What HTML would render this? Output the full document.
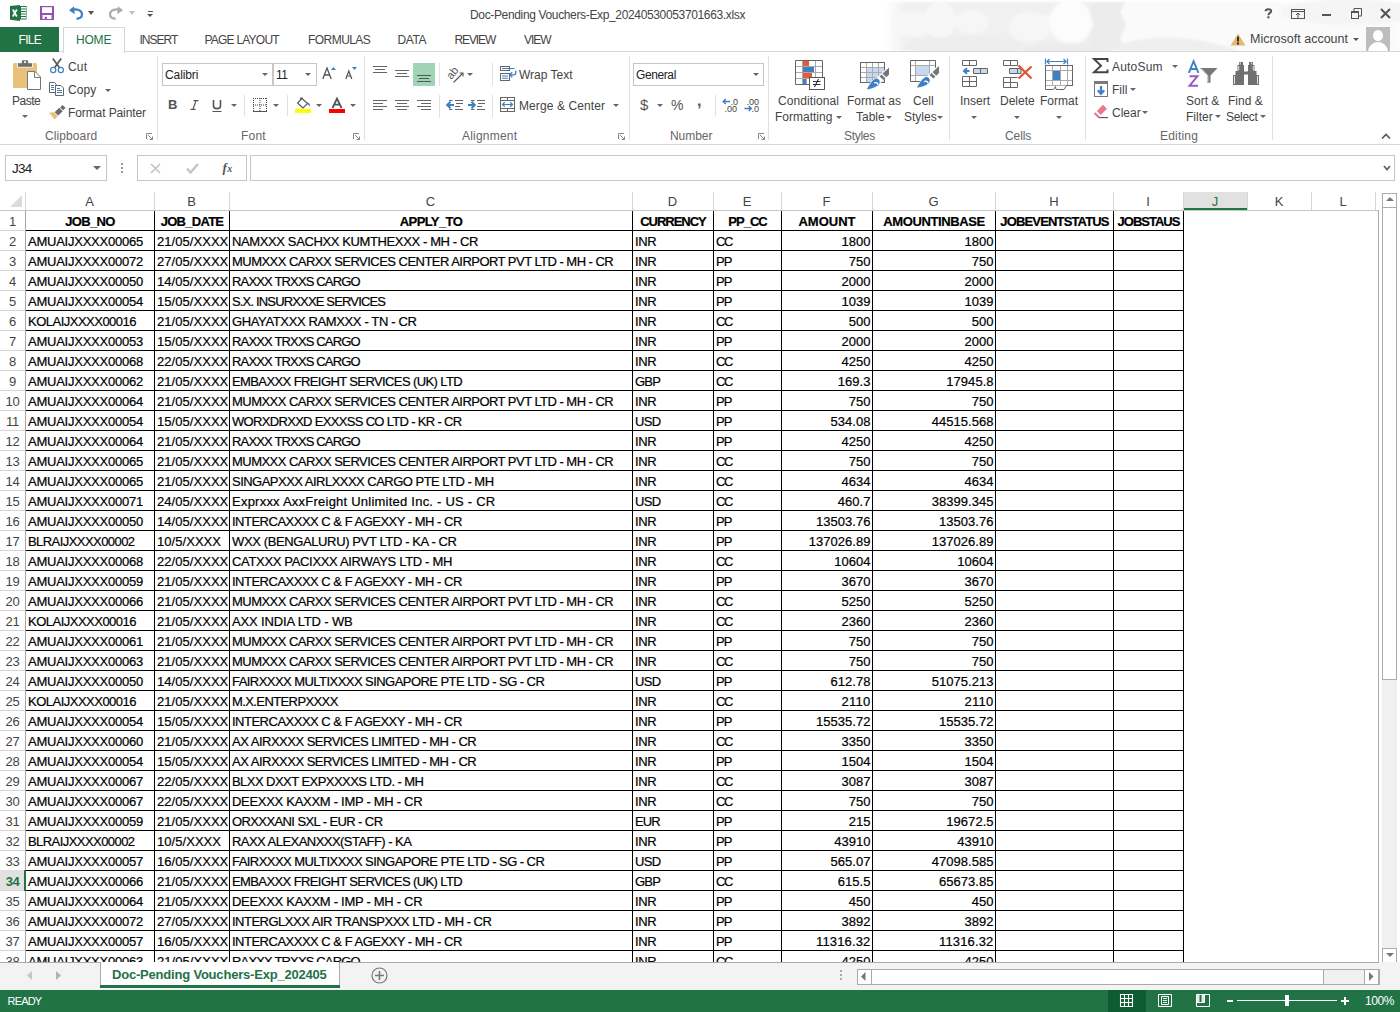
<!DOCTYPE html>
<html><head><meta charset="utf-8"><title>Excel</title>
<style>
html,body{margin:0;padding:0}
body{width:1400px;height:1012px;position:relative;overflow:hidden;background:#fff;font-family:"Liberation Sans",sans-serif;color:#444}
.a{position:absolute}
.t{position:absolute;white-space:pre;font-size:12px;line-height:14px;color:#444}
.c{position:absolute;white-space:pre;font-size:13px;line-height:20px;height:20px;color:#000;margin-top:2px;-webkit-text-stroke:0.2px #000}
.b{font-weight:bold}
.rh{position:absolute;left:0;width:25px;text-align:center;font-size:13px;line-height:20px;color:#444;letter-spacing:-0.3px;margin-top:2px}
.chd{position:absolute;top:193px;height:18px;text-align:center;font-size:13px;line-height:18px;color:#444}
.tab{position:absolute;top:28px;height:24px;line-height:24px;font-size:12px;color:#444;white-space:pre}
.sep{position:absolute;width:1px;background:#e1e1e1}
.gl{position:absolute;top:129px;font-size:12px;line-height:14px;color:#666;white-space:pre}
.dd{position:absolute;width:0;height:0;border-left:3px solid transparent;border-right:3px solid transparent;border-top:3px solid #666}
svg{position:absolute;overflow:visible}
</style></head>
<body>
<!-- ============ TITLE BAR ============ -->
<svg id="clouds" style="left:880px;top:0;overflow:hidden" width="520" height="51" viewBox="880 0 520 51">
 <defs>
  <linearGradient id="fadeL" x1="0" x2="1"><stop offset="0" stop-color="#fff"/><stop offset="1" stop-color="#f0f0f0"/></linearGradient>
  <filter id="bl" x="-10%" y="-10%" width="120%" height="120%"><feGaussianBlur stdDeviation="0.8"/></filter>
 </defs>
 <g filter="url(#bl)">
 <rect x="888" y="2" width="240" height="49" fill="#f0f0f0"/>
 <rect x="885" y="2" width="22" height="49" fill="url(#fadeL)"/>
 <ellipse cx="912" cy="24" rx="22" ry="13" fill="#f7f7f7"/>
 <ellipse cx="940" cy="20" rx="16" ry="18" fill="#f7f7f7"/>
 <ellipse cx="972" cy="22" rx="17" ry="12" fill="#f6f6f6"/>
 <ellipse cx="965" cy="46" rx="60" ry="9" fill="#ededed"/>
 <ellipse cx="1030" cy="27" rx="22" ry="15" fill="#f6f6f6"/>
 <ellipse cx="1043" cy="19" rx="7" ry="5" fill="#f6f6f6"/>
 <ellipse cx="1071" cy="22" rx="22" ry="22" fill="#fcfcfc"/>
 <ellipse cx="1065" cy="50" rx="45" ry="7" fill="#ececec"/>
 <path d="M1095 2H1128V51H1093L1088 36L1094 25L1089 12Z" fill="#ececec"/>
 <path d="M1125 2H1400V51H1125L1120 38L1126 25L1120 12Z" fill="#fafafa"/>
 <path d="M1110 51C1130 36 1180 30 1240 51Z" fill="#efefef"/>
 <ellipse cx="1350" cy="12" rx="70" ry="13" fill="#f5f5f5"/>
 </g>
</svg>
<div class="t" style="left:470px;top:8px;font-size:12px;letter-spacing:-0.35px;color:#444">Doc-Pending Vouchers-Exp_20240530053701663.xlsx</div>

<!-- QAT -->
<svg style="left:10px;top:5px" width="17" height="16" viewBox="0 0 17 16">
 <rect x="9" y="1" width="7.5" height="13.5" fill="#217346"/>
 <path d="M11 2.7H16M11 5.2H16M11 7.7H16M11 10.2H16M11 12.7H16" stroke="#fff" stroke-width="1.4"/>
 <path d="M0 1 L10 0 L10 16 L0 14.8Z" fill="#217346"/>
 <path d="M2.8 4.5 L6.8 11.5 M6.8 4.5 L2.8 11.5" stroke="#fff" stroke-width="1.7"/>
</svg>
<svg style="left:40px;top:6px" width="14" height="14" viewBox="0 0 14 14">
 <rect x="0" y="0" width="14" height="14" fill="#9450b4"/>
 <rect x="2" y="1.2" width="10" height="5.8" fill="#fff"/>
 <rect x="2.5" y="9" width="9" height="4" fill="#fff"/>
 <rect x="4.7" y="10.8" width="2.3" height="2.2" fill="#9450b4"/>
</svg>
<svg style="left:68px;top:5px" width="16" height="15" viewBox="0 0 16 15">
 <path d="M3 5 C9 3.5 14 5 14 9.5 C14 12.5 11 13.5 8.5 13.8" fill="none" stroke="#3f7fc1" stroke-width="2.2"/>
 <path d="M1 5.2 L6 1.2 L6.8 9.2Z" fill="#3f7fc1"/>
</svg>
<div class="dd" style="left:88px;top:11px;border-left-width:3.5px;border-right-width:3.5px;border-top:4px solid #555"></div>
<svg style="left:108px;top:5px" width="16" height="15" viewBox="0 0 16 15">
 <g transform="translate(16 0) scale(-1 1)">
 <path d="M3 5 C9 3.5 14 5 14 9.5 C14 12.5 11 13.5 8.5 13.8" fill="none" stroke="#ababab" stroke-width="2.2"/>
 <path d="M1 5.2 L6 1.2 L6.8 9.2Z" fill="#ababab"/>
 </g>
</svg>
<div class="dd" style="left:129px;top:11px;border-left-width:3.5px;border-right-width:3.5px;border-top:4px solid #c0c0c0"></div>
<div class="a" style="left:148px;top:11px;width:5px;height:1px;background:#555"></div>
<div class="dd" style="left:147px;top:14px;border-left-width:3.5px;border-right-width:3.5px;border-top:3.5px solid #555"></div>

<!-- window controls -->
<svg style="left:1262px;top:6px" width="12" height="14" viewBox="1262 6 12 14">
 <path d="M1265.6 11.2C1265.6 8.6 1271.2 8.4 1271.2 11C1271.2 13 1268.4 12.8 1268.4 15.2" fill="none" stroke="#555" stroke-width="2"/>
 <rect x="1267.3" y="16.3" width="2.2" height="2" fill="#555"/>
</svg>
<svg style="left:1291px;top:9px" width="14" height="10" viewBox="0 0 14 10">
 <rect x="0.5" y="0.5" width="13" height="9" fill="none" stroke="#555"/>
 <path d="M1 2.5H13" stroke="#555"/>
 <path d="M7 9V4 M5 6L7 4L9 6" fill="none" stroke="#555"/>
</svg>
<div class="a" style="left:1322px;top:14px;width:9px;height:2px;background:#555"></div>
<svg style="left:1351px;top:8px" width="11" height="11" viewBox="0 0 11 11">
 <rect x="0.5" y="3.5" width="7" height="7" fill="none" stroke="#555"/>
 <path d="M0.5 4.5H7.5" stroke="#555"/>
 <path d="M3 3V0.5H10.5V8H8" fill="none" stroke="#555"/>
</svg>
<svg style="left:1380px;top:8px" width="11" height="11" viewBox="0 0 11 11">
 <path d="M1 1L10 10M10 1L1 10" stroke="#555" stroke-width="2.1"/>
</svg>

<!-- ============ TABS ============ -->
<div class="a" style="left:0;top:51px;width:1400px;height:1px;background:#d5d5d5"></div>
<div class="a" style="left:0;top:27px;width:59px;height:25px;background:#217346"></div>
<div class="tab" style="left:18.5px;color:#fff;letter-spacing:-0.7px">FILE</div>
<div class="a" style="left:63px;top:27px;width:60px;height:25px;background:#fff;border:1px solid #d5d5d5;border-bottom:none"></div>
<div class="tab" style="left:76px;color:#217346;letter-spacing:-0.2px">HOME</div>
<div class="tab" style="left:139.5px;letter-spacing:-1px">INSERT</div>
<div class="tab" style="left:204.5px;letter-spacing:-0.78px">PAGE LAYOUT</div>
<div class="tab" style="left:308px;letter-spacing:-0.55px">FORMULAS</div>
<div class="tab" style="left:397.5px;letter-spacing:-0.4px">DATA</div>
<div class="tab" style="left:454.5px;letter-spacing:-1.1px">REVIEW</div>
<div class="tab" style="left:524px;letter-spacing:-1px">VIEW</div>

<svg style="left:1230px;top:33px" width="16" height="13" viewBox="0 0 16 13">
 <path d="M8 0.5L15.5 12.5H0.5Z" fill="#e8b96c"/>
 <rect x="7" y="3.5" width="2" height="5" fill="#333"/>
 <rect x="7" y="9.5" width="2" height="2" fill="#333"/>
</svg>
<div class="tab" style="left:1250px;top:27px;font-size:12.5px;letter-spacing:0px;color:#444">Microsoft account</div>
<div class="dd" style="left:1353px;top:38px;border-top-color:#555"></div>
<div class="a" style="left:1366px;top:27px;width:24px;height:24px;background:#bdbdbd;overflow:hidden">
 <div class="a" style="left:7px;top:3px;width:10px;height:11px;border-radius:50%;background:#fff"></div>
 <div class="a" style="left:2px;top:15px;width:20px;height:14px;border-radius:10px 10px 0 0;background:#fff"></div>
</div>

<!-- ============ RIBBON ============ -->
<div class="a" style="left:0;top:144px;width:1400px;height:1px;background:#d5d5d5"></div>
<div class="sep" style="left:157px;top:56px;height:84px"></div>
<div class="sep" style="left:364px;top:56px;height:84px"></div>
<div class="sep" style="left:629px;top:56px;height:84px"></div>
<div class="sep" style="left:768px;top:56px;height:84px"></div>
<div class="sep" style="left:949px;top:56px;height:84px"></div>
<div class="sep" style="left:1085px;top:56px;height:84px"></div>
<div class="sep" style="left:1272px;top:56px;height:84px"></div>

<!-- Clipboard -->
<svg style="left:8px;top:56px" width="36" height="38" viewBox="8 56 36 38">
 <rect x="13" y="63" width="24" height="25" rx="1.5" fill="#e9c279"/>
 <rect x="17.2" y="62.5" width="15.6" height="5" fill="#fff"/>
 <rect x="18" y="63.2" width="14" height="3.6" fill="#6f6f6f"/>
 <rect x="21.8" y="60.2" width="6.4" height="4" rx="1.2" fill="#6f6f6f"/>
 <rect x="24" y="61.3" width="2" height="1.6" fill="#fff"/>
 <path d="M27.5 71.5H35L40.5 77V89.5H27.5Z" fill="#fff" stroke="#777"/>
 <path d="M34.5 71.5V77.5H40.5" fill="none" stroke="#777"/>
</svg>
<div class="t" style="left:12px;top:94px;letter-spacing:-0.5px">Paste</div>
<div class="dd" style="left:22px;top:115px"></div>
<svg style="left:46px;top:56px" width="20" height="20" viewBox="46 56 20 20">
 <path d="M52.8 58.5L59.5 67.8M61.2 58.5L54.5 67.8" stroke="#595959" stroke-width="1.7"/>
 <circle cx="53.2" cy="70" r="2.6" fill="#fff" stroke="#3e80c4" stroke-width="1.2"/>
 <circle cx="60.8" cy="70" r="2.6" fill="#fff" stroke="#3e80c4" stroke-width="1.2"/>
</svg>
<div class="t" style="left:68px;top:60px;letter-spacing:0.2px">Cut</div>
<svg style="left:47px;top:80px" width="20" height="18" viewBox="47 80 20 18">
 <path d="M49.5 82.5H54.5L56 84V92.5H49.5Z" fill="#fff" stroke="#666"/>
 <path d="M51 85.5H54M51 87.5H54M51 89.5H54" stroke="#3e80c4"/>
 <path d="M55.5 85.5H61L63.5 88V95.5H55.5Z" fill="#fff" stroke="#666"/>
 <path d="M57 88.5H60M57 90.5H62M57 92.5H62" stroke="#3e80c4"/>
</svg>
<div class="t" style="left:68px;top:83px;letter-spacing:0.1px">Copy</div>
<div class="dd" style="left:105px;top:89px"></div>
<svg style="left:47px;top:103px" width="20" height="18" viewBox="47 103 20 18">
 <path d="M62.5 105L65.5 107.8L63.2 110.2L60.2 107.4Z" fill="#6a6a6a"/>
 <path d="M59.2 107.8L62.8 111.2L58.2 115.6L54.6 112.2Z" fill="#6a6a6a"/>
 <path d="M53.8 112.3L58 116.3L54.5 119.5L49 112.5Z" fill="#e9c279"/>
</svg>
<div class="t" style="left:68px;top:106px;letter-spacing:-0.1px">Format Painter</div>
<div class="gl" style="left:45px;letter-spacing:0.1px">Clipboard</div>
<svg style="left:146px;top:133px" width="7" height="7" viewBox="0 0 7 7">
 <path d="M0.5 6V0.5H6" fill="none" stroke="#888"/><path d="M2 2L6.5 6.5M6.5 3.5V6.5H3.5" fill="none" stroke="#888"/>
</svg>

<!-- Font -->
<div class="a" style="left:162px;top:63px;width:109px;height:21px;border:1px solid #c6c6c6;background:#fff"></div>
<div class="t" style="left:165px;top:68px;color:#222;letter-spacing:-0.1px">Calibri</div>
<div class="dd" style="left:262px;top:73px;border-top-color:#666"></div>
<div class="a" style="left:273px;top:63px;width:42px;height:21px;border:1px solid #c6c6c6;background:#fff"></div>
<div class="t" style="left:276px;top:68px;color:#222;letter-spacing:-0.5px">11</div>
<div class="dd" style="left:305px;top:73px;border-top-color:#666"></div>
<svg style="left:322px;top:66px" width="36" height="14" viewBox="0 0 36 14">
 <path d="M0.8 13L5 2L9.2 13M2.4 9H7.6" fill="none" stroke="#555" stroke-width="1.3"/>
 <path d="M9 4L11.5 1L14 4Z" fill="#3c7ec2"/>
 <path d="M23.8 13L26.8 5L29.8 13M25 10H28.6" fill="none" stroke="#555" stroke-width="1.2"/>
 <path d="M30 1H35L32.5 4Z" fill="#3c7ec2"/>
</svg>
<div class="t" style="left:168px;top:98px;font-weight:bold;font-size:13px;color:#555">B</div>
<svg style="left:190px;top:100px" width="9" height="10" viewBox="0 0 9 10">
 <path d="M3.5 0.6H8.5M0.5 9.4H5.5M6 0.6L3 9.4" fill="none" stroke="#555" stroke-width="1.2"/>
</svg>
<svg style="left:212px;top:100px" width="10" height="12" viewBox="0 0 10 12">
 <path d="M1.5 0V6C1.5 9.5 8.5 9.5 8.5 6V0" fill="none" stroke="#555" stroke-width="1.6"/>
 <path d="M0.5 11.5H9.5" stroke="#555" stroke-width="1"/>
</svg>
<div class="dd" style="left:231px;top:104px"></div>
<div class="sep" style="left:244px;top:95px;height:21px"></div>
<svg style="left:253px;top:98px" width="14" height="14" viewBox="0 0 14 14">
 <path d="M0.5 0V13M13.5 0V13M0 0.5H14M7 0V13M0 7H14" fill="none" stroke="#444" stroke-dasharray="1 1"/>
 <path d="M0 13.5H14" stroke="#555"/>
</svg>
<div class="dd" style="left:273px;top:104px"></div>
<div class="sep" style="left:287px;top:95px;height:21px"></div>
<svg style="left:295px;top:97px" width="17" height="17" viewBox="0 0 17 17">
 <path d="M7 1.5L12.5 6.5L8 11L2.5 6Z" fill="#fff" stroke="#555" stroke-width="1.1"/>
 <path d="M5.5 3V1H8" fill="none" stroke="#555"/>
 <path d="M12 5.5C14 5.5 15.5 7 14.5 9.5L12.5 7Z" fill="#3c7ec2"/>
 <rect x="0" y="12" width="16" height="4" fill="#ffff00"/>
</svg>
<div class="dd" style="left:316px;top:104px"></div>
<svg style="left:329px;top:97px" width="17" height="17" viewBox="0 0 17 17">
 <path d="M3.5 11L8 1.5L12.5 11M5.3 7.6H10.7" fill="none" stroke="#555" stroke-width="1.8"/>
 <rect x="0" y="12" width="16" height="4" fill="#ff0000"/>
</svg>
<div class="dd" style="left:350px;top:104px"></div>
<div class="gl" style="left:241px;letter-spacing:0.2px">Font</div>
<svg style="left:353px;top:133px" width="7" height="7" viewBox="0 0 7 7">
 <path d="M0.5 6V0.5H6" fill="none" stroke="#888"/><path d="M2 2L6.5 6.5M6.5 3.5V6.5H3.5" fill="none" stroke="#888"/>
</svg>

<!-- Alignment -->
<svg style="left:372px;top:63px" width="64" height="23" viewBox="0 0 64 23">
 <path d="M1 3.5H15M3 6.5H13M1 9.5H15" stroke="#666" stroke-width="1.1"/>
 <path d="M23 7.5H37M25 10.5H35M23 13.5H37" stroke="#666" stroke-width="1.1"/>
 <rect x="41" y="0" width="22" height="23" fill="#9fd5b4"/>
 <path d="M45 12.5H59M47 15.5H57M45 18.5H59" stroke="#555" stroke-width="1.1"/>
</svg>
<div class="sep" style="left:439px;top:63px;height:23px"></div>
<svg style="left:446px;top:66px" width="20" height="18" viewBox="0 0 20 18">
 <text x="0" y="0" font-size="11" font-family="Liberation Sans" fill="#555" transform="translate(5.5 14) rotate(-52)">ab</text>
 <path d="M7.5 16.5L17 7M13.5 7H17V10.5" fill="none" stroke="#555" stroke-width="1.1"/>
</svg>
<div class="dd" style="left:467px;top:73px"></div>
<div class="sep" style="left:492px;top:63px;height:23px"></div>
<svg style="left:497px;top:63px" width="22" height="20" viewBox="497 63 22 20">
 <rect x="500.5" y="66.5" width="9" height="4" fill="#fff" stroke="#666"/>
 <path d="M502 68.5H514.5" stroke="#3e80c4" stroke-width="1.1"/>
 <rect x="500.5" y="73.5" width="9" height="7" fill="#fff" stroke="#666"/>
 <path d="M502 76H508M502 78.3H508" stroke="#3e80c4" stroke-width="1.1"/>
 <path d="M515.8 70.5V72.5C515.8 74 515 74.8 513.5 74.8H510" fill="none" stroke="#3e80c4" stroke-width="1.3"/>
 <path d="M512.3 72.3L509.8 74.8L512.3 77.3" fill="none" stroke="#3e80c4" stroke-width="1.3"/>
</svg>
<div class="t" style="left:519px;top:68px;letter-spacing:0px">Wrap Text</div>
<svg style="left:372px;top:98px" width="64" height="14" viewBox="0 0 64 14">
 <path d="M1 2.5H15M1 5.5H11M1 8.5H15M1 11.5H11" stroke="#666" stroke-width="1.1"/>
 <path d="M23 2.5H37M25 5.5H35M23 8.5H37M25 11.5H35" stroke="#666" stroke-width="1.1"/>
 <path d="M45 2.5H59M49 5.5H59M45 8.5H59M49 11.5H59" stroke="#666" stroke-width="1.1"/>
</svg>
<div class="sep" style="left:439px;top:95px;height:23px"></div>
<svg style="left:446px;top:98px" width="40" height="14" viewBox="0 0 40 14">
 <path d="M3 2.5H6.5M9 2.5H17M10 5.5H17M9 8.5H14M3 11.5H6.5M9 11.5H17" stroke="#666" stroke-width="1.1"/>
 <path d="M1 7H8M4.5 3.8L1.2 7L4.5 10.2" fill="none" stroke="#3c7ec2" stroke-width="2"/>
 <path d="M25 2.5H28.5M31 2.5H39M32 5.5H39M31 8.5H36M25 11.5H28.5M31 11.5H39" stroke="#666" stroke-width="1.1"/>
 <path d="M22 7H29M25.5 3.8L28.8 7L25.5 10.2" fill="none" stroke="#3c7ec2" stroke-width="2"/>
</svg>
<div class="sep" style="left:492px;top:95px;height:23px"></div>
<svg style="left:497px;top:94px" width="22" height="20" viewBox="497 94 22 20">
 <rect x="500.5" y="97.5" width="14" height="14" fill="#fff" stroke="#666"/>
 <path d="M500.5 100.5H514.5M500.5 108.5H514.5M507.5 97.5V100.5M507.5 108.5V111.5" fill="none" stroke="#666"/>
 <path d="M502.5 104.5H512.5M504.8 102.3L502.5 104.5L504.8 106.7M510.2 102.3L512.5 104.5L510.2 106.7" fill="none" stroke="#3e80c4" stroke-width="1.2"/>
</svg>
<div class="t" style="left:519px;top:99px;letter-spacing:0.1px">Merge &amp; Center</div>
<div class="dd" style="left:613px;top:104px"></div>
<div class="gl" style="left:462px;letter-spacing:0.2px">Alignment</div>
<svg style="left:618px;top:133px" width="7" height="7" viewBox="0 0 7 7">
 <path d="M0.5 6V0.5H6" fill="none" stroke="#888"/><path d="M2 2L6.5 6.5M6.5 3.5V6.5H3.5" fill="none" stroke="#888"/>
</svg>

<!-- Number -->
<div class="a" style="left:633px;top:63px;width:129px;height:21px;border:1px solid #c6c6c6;background:#fff"></div>
<div class="t" style="left:636px;top:68px;color:#222;letter-spacing:-0.4px">General</div>
<div class="dd" style="left:753px;top:73px;border-top-color:#666"></div>
<div class="t" style="left:640px;top:97px;font-size:15px;line-height:16px;color:#555">$</div>
<div class="dd" style="left:657px;top:104px"></div>
<div class="t" style="left:671px;top:98px;font-size:14px;color:#555">%</div>
<div class="t" style="left:697px;top:94px;font-size:16px;font-weight:bold;color:#555">,</div>
<div class="sep" style="left:715px;top:95px;height:21px"></div>
<svg style="left:722px;top:97px" width="40" height="16" viewBox="0 0 40 16">
 <text x="8.5" y="7.5" font-size="9" font-family="Liberation Sans" fill="#444">.0</text>
 <text x="2.5" y="14.5" font-size="9" font-family="Liberation Sans" fill="#444">.00</text>
 <path d="M1 4.5H8M3.8 2L1.2 4.5L3.8 7" fill="none" stroke="#3c7ec2" stroke-width="1.4"/>
 <text x="24.5" y="7.5" font-size="9" font-family="Liberation Sans" fill="#444">.00</text>
 <text x="29.5" y="14.5" font-size="9" font-family="Liberation Sans" fill="#444">.0</text>
 <path d="M22.5 11.5H29.5M26.7 9L29.3 11.5L26.7 14" fill="none" stroke="#3c7ec2" stroke-width="1.4"/>
</svg>
<div class="gl" style="left:670px;letter-spacing:-0.05px">Number</div>
<svg style="left:758px;top:133px" width="7" height="7" viewBox="0 0 7 7">
 <path d="M0.5 6V0.5H6" fill="none" stroke="#888"/><path d="M2 2L6.5 6.5M6.5 3.5V6.5H3.5" fill="none" stroke="#888"/>
</svg>

<!-- Styles -->
<svg style="left:790px;top:55px" width="40" height="40" viewBox="790 55 40 40">
 <rect x="803" y="61" width="6" height="5" fill="#e25b37"/>
 <rect x="803" y="67" width="11" height="5" fill="#3e80c4"/>
 <rect x="803" y="73" width="9" height="5" fill="#e25b37"/>
 <rect x="803" y="79" width="3.6" height="5" fill="#3e80c4"/>
 <path d="M795.5 66.5H822.5M795.5 72.5H822.5M795.5 78.5H809M802.5 60.5V84.5M815.5 60.5V77" fill="none" stroke="#aaa" stroke-width="1"/>
 <path d="M795.5 60.5H822.5V77M809 84.5H795.5V60.5" fill="none" stroke="#666" stroke-width="1"/>
 <rect x="809.5" y="77.5" width="15" height="12" fill="#fff" stroke="#555"/>
 <path d="M813 81.5H820.5M813 84.5H820.5M818.5 79L814.5 87" fill="none" stroke="#333" stroke-width="1.1"/>
</svg>
<div class="t" style="left:778px;top:94px;letter-spacing:0.1px">Conditional</div>
<div class="t" style="left:775px;top:110px;letter-spacing:0px">Formatting</div>
<div class="dd" style="left:836px;top:116px"></div>
<svg style="left:855px;top:55px" width="40" height="40" viewBox="855 55 40 40">
 <rect x="866.5" y="67.5" width="18" height="15" fill="#c5d9f1"/>
 <path d="M866.5 62.5V82.5M872.5 62.5V82.5M878.5 62.5V82.5M860.5 67.5H884.5M860.5 72.5H884.5M860.5 77.5H884.5" fill="none" stroke="#aaa"/>
 <rect x="860.5" y="62.5" width="24" height="20" fill="none" stroke="#666"/>
 <path d="M889 66L889 74.5L880.5 83L876 78.5Z" fill="#fff"/>
 <path d="M889 67.5V74.5L883.5 80L879.5 76.5Z" fill="#767676"/>
 <path d="M882 74L886 78" stroke="#fff" stroke-width="1.2"/>
 <path d="M876.5 78C881 79 881.5 84 877 86.5C873.5 88.5 869 89.8 866.3 89.8C868.5 85.5 872 79 876.5 78Z" fill="#3e80c4" stroke="#fff" stroke-width="0.8"/>
 <path d="M874 83C876 82 878 83 878 85" fill="none" stroke="#fff" stroke-width="1.3"/>
</svg>
<div class="t" style="left:847px;top:94px;letter-spacing:0px">Format as</div>
<div class="t" style="left:856px;top:110px;letter-spacing:0px">Table</div>
<div class="dd" style="left:886px;top:116px"></div>
<svg style="left:905px;top:55px" width="40" height="40" viewBox="905 55 40 40">
 <rect x="915.5" y="65.5" width="14" height="10" fill="#c5d9f1"/>
 <path d="M915.5 60.5V81.5M929.5 60.5V77M910.5 65.5H935.5M910.5 75.5H929.5" fill="none" stroke="#aaa"/>
 <path d="M921 81.5H910.5V60.5H935.5V68" fill="none" stroke="#666"/>
 <path d="M939 64.5L939 73L930.5 81.5L926 77Z" fill="#fff"/>
 <path d="M939 66V73L933.5 78.5L929.5 75Z" fill="#767676"/>
 <path d="M932 72.5L936 76.5" stroke="#fff" stroke-width="1.2"/>
 <path d="M926.5 76.5C931 77.5 931.5 82.5 927 85C923.5 87 919 88 916.3 88C918.5 84 922 77.5 926.5 76.5Z" fill="#3e80c4" stroke="#fff" stroke-width="0.8"/>
 <path d="M924 81.5C926 80.5 928 81.5 928 83.5" fill="none" stroke="#fff" stroke-width="1.3"/>
</svg>
<div class="t" style="left:913px;top:94px;letter-spacing:0px">Cell</div>
<div class="t" style="left:904px;top:110px;letter-spacing:0px">Styles</div>
<div class="dd" style="left:937px;top:116px"></div>
<div class="gl" style="left:844px;letter-spacing:-0.3px">Styles</div>

<!-- Cells -->
<svg style="left:955px;top:55px" width="40" height="40" viewBox="955 55 40 40">
 <path d="M962.5 60.5H976.5V65.5H962.5Z M969.5 60.5V65.5" fill="none" stroke="#666"/>
 <path d="M973.5 68.5H987.5V73.5H973.5Z" fill="#c5d9f1" stroke="#666"/>
 <path d="M980.5 68.5V73.5" stroke="#666"/>
 <path d="M962.5 76.5H976.5V86.5H962.5Z M969.5 76.5V86.5 M962.5 81.5H976.5" fill="none" stroke="#666"/>
 <path d="M969.5 71H964.5M967 68.3L964 71L967 73.7" fill="none" stroke="#3e80c4" stroke-width="2"/>
</svg>
<div class="t" style="left:960px;top:94px;letter-spacing:0px">Insert</div>
<div class="dd" style="left:971px;top:116px"></div>
<svg style="left:1000px;top:55px" width="40" height="40" viewBox="1000 55 40 40">
 <path d="M1003.5 60.5H1017.5V65.5H1003.5Z M1010.5 60.5V65.5" fill="none" stroke="#666"/>
 <path d="M1009.5 68.5H1021V73.5H1009.5Z" fill="#c5d9f1" stroke="#666"/>
 <path d="M1017.5 68.5V73.5" stroke="#666"/>
 <path d="M1017.5 77.5H1003.5V87.5H1017.5V82.5M1010.5 77.5V87.5M1003.5 82.5H1017.5" fill="none" stroke="#666"/>
 <path d="M1018.5 65.5L1031.5 78.5M1031.5 66.5L1018.5 78.5" stroke="#e0533a" stroke-width="2.3"/>
</svg>
<div class="t" style="left:1000px;top:94px;letter-spacing:0px">Delete</div>
<div class="dd" style="left:1014px;top:116px"></div>
<svg style="left:1040px;top:55px" width="40" height="40" viewBox="1040 55 40 40">
 <path d="M1045.5 58.5V64.5M1067.5 58.5V64.5M1047 61.5H1066M1049.5 59L1047 61.5L1049.5 64M1063.5 59L1066 61.5L1063.5 64" fill="none" stroke="#3e80c4" stroke-width="1.2"/>
 <rect x="1053" y="71" width="7.5" height="9" fill="#3e80c4"/>
 <path d="M1052.5 65.5V85.5M1060.5 65.5V85.5M1067.5 65.5V85.5M1045.5 70.5H1072.5M1045.5 80.5H1072.5" fill="none" stroke="#aaa"/>
 <rect x="1045.5" y="65.5" width="27" height="20" fill="none" stroke="#666"/>
 <path d="M1045.5 85.5V89.5H1053.5L1055.5 86.5L1056 89.5H1064L1066.5 85.5" fill="#fff" stroke="#666"/>
</svg>
<div class="t" style="left:1040px;top:94px;letter-spacing:0px">Format</div>
<div class="dd" style="left:1056px;top:116px"></div>
<div class="gl" style="left:1005px;letter-spacing:-0.1px">Cells</div>

<!-- Editing -->
<svg style="left:1090px;top:55px" width="20" height="20" viewBox="1090 55 20 20">
 <path d="M1107.5 62V59H1094L1101 65.8L1094 72.3H1107.5V69.5" fill="none" stroke="#444" stroke-width="1.9" stroke-linejoin="miter"/>
</svg>
<div class="t" style="left:1112px;top:60px;letter-spacing:0.2px">AutoSum</div>
<div class="dd" style="left:1172px;top:65px"></div>
<svg style="left:1090px;top:78px" width="20" height="22" viewBox="1090 78 20 22">
 <rect x="1094.5" y="81.5" width="13" height="15" fill="#fff" stroke="#777"/>
 <rect x="1094" y="81" width="14" height="3" fill="#7a7a7a"/>
 <path d="M1101 86V93.5M1097.8 90.3L1101 93.8L1104.2 90.3" fill="none" stroke="#3e80c4" stroke-width="2.2"/>
</svg>
<div class="t" style="left:1112px;top:83px;letter-spacing:0px">Fill</div>
<div class="dd" style="left:1130px;top:88px"></div>
<svg style="left:1090px;top:102px" width="20" height="18" viewBox="1090 102 20 18">
 <path d="M1103 104.8L1107 108.8L1100.8 115L1096.8 111Z" fill="#e8798f"/>
 <path d="M1095.3 112.3L1099.8 116.8L1098.3 118.2L1093.8 113.7Z" fill="#e8798f"/>
 <path d="M1099 117.6H1108" stroke="#555" stroke-width="1.1"/>
</svg>
<div class="t" style="left:1112px;top:106px;letter-spacing:0px">Clear</div>
<div class="dd" style="left:1142px;top:111px"></div>
<svg style="left:1185px;top:58px" width="36" height="32" viewBox="1185 58 36 32">
 <path d="M1188.8 72.8L1193.6 61.2L1198.4 72.8M1190.5 69H1196.7" fill="none" stroke="#3e80c4" stroke-width="1.9"/>
 <path d="M1189.5 76.2H1197.5L1189.5 85.8H1198" fill="none" stroke="#9b59c5" stroke-width="1.9"/>
 <path d="M1200 68H1217.5L1210.5 75.5V82.8H1207V75.5Z" fill="#777"/>
 <path d="M1201.5 68.8L1207.8 75.8V82.5" fill="none" stroke="#fff" stroke-width="0.9"/>
</svg>
<div class="t" style="left:1186px;top:94px;letter-spacing:0px">Sort &amp;</div>
<div class="t" style="left:1186px;top:110px;letter-spacing:0px">Filter</div>
<div class="dd" style="left:1215px;top:115px"></div>
<svg style="left:1230px;top:58px" width="32" height="30" viewBox="1230 58 32 30">
 <path d="M1239 62H1243V65H1244V85H1233V75H1235.5V71H1237.5V65H1239Z" fill="#707070"/>
 <path d="M1253 62H1249V65H1248V85H1259V75H1256.5V71H1254.5V65H1253Z" fill="#707070"/>
 <rect x="1244" y="71.5" width="4" height="3" fill="#707070"/>
 <path d="M1234.5 76V84M1257.5 76V84M1240.3 62.5V64.5M1251.7 62.5V64.5M1238.7 66V70.5M1253.3 66V70.5" stroke="#fff" stroke-width="0.8"/>
</svg>
<div class="t" style="left:1228px;top:94px;letter-spacing:0px">Find &amp;</div>
<div class="t" style="left:1226px;top:110px;letter-spacing:-0.3px">Select</div>
<div class="dd" style="left:1260px;top:115px"></div>
<div class="gl" style="left:1160px;letter-spacing:0.2px">Editing</div>
<svg style="left:1381px;top:133px" width="10" height="6" viewBox="0 0 10 6">
 <path d="M1 5.5L5 1.5L9 5.5" fill="none" stroke="#555" stroke-width="1.6"/>
</svg>

<!-- ============ FORMULA BAR ============ -->
<div class="a" style="left:5px;top:155px;width:100px;height:24px;border:1px solid #c6c6c6"></div>
<div class="t" style="left:12px;top:162px;font-size:13.5px;color:#222;letter-spacing:-0.7px">J34</div>
<div class="dd" style="left:93px;top:166px;border-left-width:4px;border-right-width:4px;border-top-width:4px;border-top-color:#666"></div>
<div class="a" style="left:121px;top:163px;width:2px;height:2px;background:#999"></div>
<div class="a" style="left:121px;top:167px;width:2px;height:2px;background:#999"></div>
<div class="a" style="left:121px;top:171px;width:2px;height:2px;background:#999"></div>
<div class="a" style="left:137px;top:155px;width:108px;height:24px;border:1px solid #c6c6c6"></div>
<svg style="left:150px;top:163px" width="11" height="11" viewBox="0 0 11 11">
 <path d="M1 1L10 10M10 1L1 10" stroke="#c4c4c4" stroke-width="1.7"/>
</svg>
<svg style="left:186px;top:163px" width="13" height="11" viewBox="0 0 13 11">
 <path d="M1 5.5L4.5 9.5L12 1" fill="none" stroke="#c4c4c4" stroke-width="2.4"/>
</svg>
<svg style="left:220px;top:160px" width="18" height="16" viewBox="220 160 18 16">
 <text x="222.5" y="172" font-size="13" font-style="italic" font-weight="bold" font-family="Liberation Serif" fill="#555">f</text>
 <text x="227.3" y="172" font-size="10" font-style="italic" font-weight="bold" font-family="Liberation Serif" fill="#555">x</text>
</svg>
<div class="a" style="left:250px;top:155px;width:1143px;height:24px;border:1px solid #c6c6c6"></div>
<svg style="left:1383px;top:165px" width="8" height="6" viewBox="0 0 8 6">
 <path d="M1 1L4 4.5L7 1" fill="none" stroke="#666" stroke-width="1.8"/>
</svg>

<!-- ============ COLUMN HEADERS ============ -->
<svg style="left:10px;top:195px" width="13" height="12" viewBox="0 0 13 12">
 <path d="M12 0V12H0Z" fill="#dcdcdc"/>
</svg>
<div class="a" style="left:25px;top:192px;width:1px;height:18px;background:#d4d4d4"></div>
<div class="chd" style="left:25px;width:129px">A</div>
<div class="a" style="left:154px;top:192px;width:1px;height:18px;background:#d4d4d4"></div>
<div class="chd" style="left:154px;width:75px">B</div>
<div class="a" style="left:229px;top:192px;width:1px;height:18px;background:#d4d4d4"></div>
<div class="chd" style="left:229px;width:403px">C</div>
<div class="a" style="left:632px;top:192px;width:1px;height:18px;background:#d4d4d4"></div>
<div class="chd" style="left:632px;width:81px">D</div>
<div class="a" style="left:713px;top:192px;width:1px;height:18px;background:#d4d4d4"></div>
<div class="chd" style="left:713px;width:68px">E</div>
<div class="a" style="left:781px;top:192px;width:1px;height:18px;background:#d4d4d4"></div>
<div class="chd" style="left:781px;width:91px">F</div>
<div class="a" style="left:872px;top:192px;width:1px;height:18px;background:#d4d4d4"></div>
<div class="chd" style="left:872px;width:123px">G</div>
<div class="a" style="left:995px;top:192px;width:1px;height:18px;background:#d4d4d4"></div>
<div class="chd" style="left:995px;width:118px">H</div>
<div class="a" style="left:1113px;top:192px;width:1px;height:18px;background:#d4d4d4"></div>
<div class="chd" style="left:1113px;width:70px">I</div>
<div class="a" style="left:1183px;top:192px;width:1px;height:18px;background:#d4d4d4"></div>
<div class="a" style="left:1184px;top:192px;width:63px;height:18px;background:#e1e1e1"></div>
<div class="a" style="left:1184px;top:208px;width:63px;height:2px;background:#217346"></div>
<div class="chd" style="left:1183px;width:64px;color:#217346">J</div>
<div class="a" style="left:1247px;top:192px;width:1px;height:18px;background:#d4d4d4"></div>
<div class="chd" style="left:1247px;width:64px">K</div>
<div class="a" style="left:1311px;top:192px;width:1px;height:18px;background:#d4d4d4"></div>
<div class="chd" style="left:1311px;width:64px">L</div>
<div class="a" style="left:1375px;top:192px;width:1px;height:18px;background:#d4d4d4"></div>
<div class="a" style="left:0;top:210px;width:1379px;height:1px;background:#c6c6c6"></div>

<!-- ============ GRID ============ -->
<div class="a" style="left:25px;top:211px;width:1px;height:751px;background:#c6c6c6"></div>
<div class="rh" style="top:210px">1</div>
<div class="a" style="left:0;top:230px;width:25px;height:1px;background:#d4d4d4"></div>
<div class="rh" style="top:230px">2</div>
<div class="a" style="left:0;top:250px;width:25px;height:1px;background:#d4d4d4"></div>
<div class="rh" style="top:250px">3</div>
<div class="a" style="left:0;top:270px;width:25px;height:1px;background:#d4d4d4"></div>
<div class="rh" style="top:270px">4</div>
<div class="a" style="left:0;top:290px;width:25px;height:1px;background:#d4d4d4"></div>
<div class="rh" style="top:290px">5</div>
<div class="a" style="left:0;top:310px;width:25px;height:1px;background:#d4d4d4"></div>
<div class="rh" style="top:310px">6</div>
<div class="a" style="left:0;top:330px;width:25px;height:1px;background:#d4d4d4"></div>
<div class="rh" style="top:330px">7</div>
<div class="a" style="left:0;top:350px;width:25px;height:1px;background:#d4d4d4"></div>
<div class="rh" style="top:350px">8</div>
<div class="a" style="left:0;top:370px;width:25px;height:1px;background:#d4d4d4"></div>
<div class="rh" style="top:370px">9</div>
<div class="a" style="left:0;top:390px;width:25px;height:1px;background:#d4d4d4"></div>
<div class="rh" style="top:390px">10</div>
<div class="a" style="left:0;top:410px;width:25px;height:1px;background:#d4d4d4"></div>
<div class="rh" style="top:410px">11</div>
<div class="a" style="left:0;top:430px;width:25px;height:1px;background:#d4d4d4"></div>
<div class="rh" style="top:430px">12</div>
<div class="a" style="left:0;top:450px;width:25px;height:1px;background:#d4d4d4"></div>
<div class="rh" style="top:450px">13</div>
<div class="a" style="left:0;top:470px;width:25px;height:1px;background:#d4d4d4"></div>
<div class="rh" style="top:470px">14</div>
<div class="a" style="left:0;top:490px;width:25px;height:1px;background:#d4d4d4"></div>
<div class="rh" style="top:490px">15</div>
<div class="a" style="left:0;top:510px;width:25px;height:1px;background:#d4d4d4"></div>
<div class="rh" style="top:510px">16</div>
<div class="a" style="left:0;top:530px;width:25px;height:1px;background:#d4d4d4"></div>
<div class="rh" style="top:530px">17</div>
<div class="a" style="left:0;top:550px;width:25px;height:1px;background:#d4d4d4"></div>
<div class="rh" style="top:550px">18</div>
<div class="a" style="left:0;top:570px;width:25px;height:1px;background:#d4d4d4"></div>
<div class="rh" style="top:570px">19</div>
<div class="a" style="left:0;top:590px;width:25px;height:1px;background:#d4d4d4"></div>
<div class="rh" style="top:590px">20</div>
<div class="a" style="left:0;top:610px;width:25px;height:1px;background:#d4d4d4"></div>
<div class="rh" style="top:610px">21</div>
<div class="a" style="left:0;top:630px;width:25px;height:1px;background:#d4d4d4"></div>
<div class="rh" style="top:630px">22</div>
<div class="a" style="left:0;top:650px;width:25px;height:1px;background:#d4d4d4"></div>
<div class="rh" style="top:650px">23</div>
<div class="a" style="left:0;top:670px;width:25px;height:1px;background:#d4d4d4"></div>
<div class="rh" style="top:670px">24</div>
<div class="a" style="left:0;top:690px;width:25px;height:1px;background:#d4d4d4"></div>
<div class="rh" style="top:690px">25</div>
<div class="a" style="left:0;top:710px;width:25px;height:1px;background:#d4d4d4"></div>
<div class="rh" style="top:710px">26</div>
<div class="a" style="left:0;top:730px;width:25px;height:1px;background:#d4d4d4"></div>
<div class="rh" style="top:730px">27</div>
<div class="a" style="left:0;top:750px;width:25px;height:1px;background:#d4d4d4"></div>
<div class="rh" style="top:750px">28</div>
<div class="a" style="left:0;top:770px;width:25px;height:1px;background:#d4d4d4"></div>
<div class="rh" style="top:770px">29</div>
<div class="a" style="left:0;top:790px;width:25px;height:1px;background:#d4d4d4"></div>
<div class="rh" style="top:790px">30</div>
<div class="a" style="left:0;top:810px;width:25px;height:1px;background:#d4d4d4"></div>
<div class="rh" style="top:810px">31</div>
<div class="a" style="left:0;top:830px;width:25px;height:1px;background:#d4d4d4"></div>
<div class="rh" style="top:830px">32</div>
<div class="a" style="left:0;top:850px;width:25px;height:1px;background:#d4d4d4"></div>
<div class="rh" style="top:850px">33</div>
<div class="a" style="left:0;top:870px;width:25px;height:1px;background:#d4d4d4"></div>
<div class="a" style="left:0;top:870px;width:24px;height:20px;background:#e1e1e1"></div>
<div class="rh" style="top:870px;color:#217346;font-weight:bold;letter-spacing:-0.6px">34</div>
<div class="a" style="left:0;top:890px;width:25px;height:1px;background:#d4d4d4"></div>
<div class="rh" style="top:890px">35</div>
<div class="a" style="left:0;top:910px;width:25px;height:1px;background:#d4d4d4"></div>
<div class="rh" style="top:910px">36</div>
<div class="a" style="left:0;top:930px;width:25px;height:1px;background:#d4d4d4"></div>
<div class="rh" style="top:930px">37</div>
<div class="a" style="left:0;top:950px;width:25px;height:1px;background:#d4d4d4"></div>
<div class="rh" style="top:950px">38</div>
<div class="a" style="left:0;top:970px;width:25px;height:1px;background:#d4d4d4"></div>
<div class="a" style="left:26px;top:230px;width:1158px;height:1px;background:#000"></div>
<div class="a" style="left:26px;top:250px;width:1158px;height:1px;background:#000"></div>
<div class="a" style="left:26px;top:270px;width:1158px;height:1px;background:#000"></div>
<div class="a" style="left:26px;top:290px;width:1158px;height:1px;background:#000"></div>
<div class="a" style="left:26px;top:310px;width:1158px;height:1px;background:#000"></div>
<div class="a" style="left:26px;top:330px;width:1158px;height:1px;background:#000"></div>
<div class="a" style="left:26px;top:350px;width:1158px;height:1px;background:#000"></div>
<div class="a" style="left:26px;top:370px;width:1158px;height:1px;background:#000"></div>
<div class="a" style="left:26px;top:390px;width:1158px;height:1px;background:#000"></div>
<div class="a" style="left:26px;top:410px;width:1158px;height:1px;background:#000"></div>
<div class="a" style="left:26px;top:430px;width:1158px;height:1px;background:#000"></div>
<div class="a" style="left:26px;top:450px;width:1158px;height:1px;background:#000"></div>
<div class="a" style="left:26px;top:470px;width:1158px;height:1px;background:#000"></div>
<div class="a" style="left:26px;top:490px;width:1158px;height:1px;background:#000"></div>
<div class="a" style="left:26px;top:510px;width:1158px;height:1px;background:#000"></div>
<div class="a" style="left:26px;top:530px;width:1158px;height:1px;background:#000"></div>
<div class="a" style="left:26px;top:550px;width:1158px;height:1px;background:#000"></div>
<div class="a" style="left:26px;top:570px;width:1158px;height:1px;background:#000"></div>
<div class="a" style="left:26px;top:590px;width:1158px;height:1px;background:#000"></div>
<div class="a" style="left:26px;top:610px;width:1158px;height:1px;background:#000"></div>
<div class="a" style="left:26px;top:630px;width:1158px;height:1px;background:#000"></div>
<div class="a" style="left:26px;top:650px;width:1158px;height:1px;background:#000"></div>
<div class="a" style="left:26px;top:670px;width:1158px;height:1px;background:#000"></div>
<div class="a" style="left:26px;top:690px;width:1158px;height:1px;background:#000"></div>
<div class="a" style="left:26px;top:710px;width:1158px;height:1px;background:#000"></div>
<div class="a" style="left:26px;top:730px;width:1158px;height:1px;background:#000"></div>
<div class="a" style="left:26px;top:750px;width:1158px;height:1px;background:#000"></div>
<div class="a" style="left:26px;top:770px;width:1158px;height:1px;background:#000"></div>
<div class="a" style="left:26px;top:790px;width:1158px;height:1px;background:#000"></div>
<div class="a" style="left:26px;top:810px;width:1158px;height:1px;background:#000"></div>
<div class="a" style="left:26px;top:830px;width:1158px;height:1px;background:#000"></div>
<div class="a" style="left:26px;top:850px;width:1158px;height:1px;background:#000"></div>
<div class="a" style="left:26px;top:870px;width:1158px;height:1px;background:#000"></div>
<div class="a" style="left:26px;top:890px;width:1158px;height:1px;background:#000"></div>
<div class="a" style="left:26px;top:910px;width:1158px;height:1px;background:#000"></div>
<div class="a" style="left:26px;top:930px;width:1158px;height:1px;background:#000"></div>
<div class="a" style="left:26px;top:950px;width:1158px;height:1px;background:#000"></div>
<div class="a" style="left:154px;top:211px;width:1px;height:751px;background:#000"></div>
<div class="a" style="left:229px;top:211px;width:1px;height:751px;background:#000"></div>
<div class="a" style="left:632px;top:211px;width:1px;height:751px;background:#000"></div>
<div class="a" style="left:713px;top:211px;width:1px;height:751px;background:#000"></div>
<div class="a" style="left:781px;top:211px;width:1px;height:751px;background:#000"></div>
<div class="a" style="left:872px;top:211px;width:1px;height:751px;background:#000"></div>
<div class="a" style="left:995px;top:211px;width:1px;height:751px;background:#000"></div>
<div class="a" style="left:1113px;top:211px;width:1px;height:751px;background:#000"></div>
<div class="a" style="left:25px;top:211px;width:1px;height:751px;background:#a6a6a6"></div>
<div class="a" style="left:1183px;top:211px;width:1px;height:751px;background:#000"></div>
<div class="a" style="left:24px;top:870px;width:2px;height:21px;background:#217346"></div>
<div class="c b" style="top:210px;left:65.3px;letter-spacing:-0.66px">JOB_NO</div>
<div class="c b" style="top:210px;left:160.7px;letter-spacing:-0.72px">JOB_DATE</div>
<div class="c b" style="top:210px;left:399.8px;letter-spacing:-0.60px">APPLY_TO</div>
<div class="c b" style="top:210px;left:640.2px;letter-spacing:-1.01px">CURRENCY</div>
<div class="c b" style="top:210px;left:728.3px;letter-spacing:-0.98px">PP_CC</div>
<div class="c b" style="top:210px;left:798.4px;letter-spacing:0.02px">AMOUNT</div>
<div class="c b" style="top:210px;left:883.2px;letter-spacing:-0.38px">AMOUNTINBASE</div>
<div class="c b" style="top:210px;left:1000.3px;letter-spacing:-0.84px">JOBEVENTSTATUS</div>
<div class="c b" style="top:210px;left:1117.6px;letter-spacing:-1.01px">JOBSTAUS</div>
<div class="c" style="top:230px;left:28px;letter-spacing:-0.24px">AMUAIJXXXX00065</div>
<div class="c" style="top:230px;left:157px;letter-spacing:0.05px">21/05/XXXX</div>
<div class="c" style="top:230px;left:232px;letter-spacing:-0.38px">NAMXXX SACHXX KUMTHEXXX - MH - CR</div>
<div class="c" style="top:230px;left:635px;letter-spacing:-0.34px">INR</div>
<div class="c" style="top:230px;left:716px;letter-spacing:-1.47px">CC</div>
<div class="c" style="top:230px;left:841.5px;letter-spacing:0.02px">1800</div>
<div class="c" style="top:230px;left:964.5px;letter-spacing:0.02px">1800</div>
<div class="c" style="top:250px;left:28px;letter-spacing:-0.24px">AMUAIJXXXX00072</div>
<div class="c" style="top:250px;left:157px;letter-spacing:0.05px">27/05/XXXX</div>
<div class="c" style="top:250px;left:232px;letter-spacing:-0.53px">MUMXXX CARXX SERVICES CENTER AIRPORT PVT LTD - MH - CR</div>
<div class="c" style="top:250px;left:635px;letter-spacing:-0.34px">INR</div>
<div class="c" style="top:250px;left:716px;letter-spacing:-1.00px">PP</div>
<div class="c" style="top:250px;left:848.8px;letter-spacing:0.02px">750</div>
<div class="c" style="top:250px;left:971.8px;letter-spacing:0.02px">750</div>
<div class="c" style="top:270px;left:28px;letter-spacing:-0.24px">AMUAIJXXXX00050</div>
<div class="c" style="top:270px;left:157px;letter-spacing:0.05px">14/05/XXXX</div>
<div class="c" style="top:270px;left:232px;letter-spacing:-0.84px">RAXXX TRXXS CARGO</div>
<div class="c" style="top:270px;left:635px;letter-spacing:-0.34px">INR</div>
<div class="c" style="top:270px;left:716px;letter-spacing:-1.00px">PP</div>
<div class="c" style="top:270px;left:841.5px;letter-spacing:0.02px">2000</div>
<div class="c" style="top:270px;left:964.5px;letter-spacing:0.02px">2000</div>
<div class="c" style="top:290px;left:28px;letter-spacing:-0.24px">AMUAIJXXXX00054</div>
<div class="c" style="top:290px;left:157px;letter-spacing:0.05px">15/05/XXXX</div>
<div class="c" style="top:290px;left:232px;letter-spacing:-0.84px">S.X. INSURXXXE SERVICES</div>
<div class="c" style="top:290px;left:635px;letter-spacing:-0.34px">INR</div>
<div class="c" style="top:290px;left:716px;letter-spacing:-1.00px">PP</div>
<div class="c" style="top:290px;left:841.5px;letter-spacing:0.02px">1039</div>
<div class="c" style="top:290px;left:964.5px;letter-spacing:0.02px">1039</div>
<div class="c" style="top:310px;left:28px;letter-spacing:-0.51px">KOLAIJXXXX00016</div>
<div class="c" style="top:310px;left:157px;letter-spacing:0.05px">21/05/XXXX</div>
<div class="c" style="top:310px;left:232px;letter-spacing:-0.37px">GHAYATXXX RAMXXX - TN - CR</div>
<div class="c" style="top:310px;left:635px;letter-spacing:-0.34px">INR</div>
<div class="c" style="top:310px;left:716px;letter-spacing:-1.47px">CC</div>
<div class="c" style="top:310px;left:848.8px;letter-spacing:0.02px">500</div>
<div class="c" style="top:310px;left:971.8px;letter-spacing:0.02px">500</div>
<div class="c" style="top:330px;left:28px;letter-spacing:-0.24px">AMUAIJXXXX00053</div>
<div class="c" style="top:330px;left:157px;letter-spacing:0.05px">15/05/XXXX</div>
<div class="c" style="top:330px;left:232px;letter-spacing:-0.84px">RAXXX TRXXS CARGO</div>
<div class="c" style="top:330px;left:635px;letter-spacing:-0.34px">INR</div>
<div class="c" style="top:330px;left:716px;letter-spacing:-1.00px">PP</div>
<div class="c" style="top:330px;left:841.5px;letter-spacing:0.02px">2000</div>
<div class="c" style="top:330px;left:964.5px;letter-spacing:0.02px">2000</div>
<div class="c" style="top:350px;left:28px;letter-spacing:-0.24px">AMUAIJXXXX00068</div>
<div class="c" style="top:350px;left:157px;letter-spacing:0.05px">22/05/XXXX</div>
<div class="c" style="top:350px;left:232px;letter-spacing:-0.84px">RAXXX TRXXS CARGO</div>
<div class="c" style="top:350px;left:635px;letter-spacing:-0.34px">INR</div>
<div class="c" style="top:350px;left:716px;letter-spacing:-1.47px">CC</div>
<div class="c" style="top:350px;left:841.5px;letter-spacing:0.02px">4250</div>
<div class="c" style="top:350px;left:964.5px;letter-spacing:0.02px">4250</div>
<div class="c" style="top:370px;left:28px;letter-spacing:-0.24px">AMUAIJXXXX00062</div>
<div class="c" style="top:370px;left:157px;letter-spacing:0.05px">21/05/XXXX</div>
<div class="c" style="top:370px;left:232px;letter-spacing:-0.60px">EMBAXXX FREIGHT SERVICES (UK) LTD</div>
<div class="c" style="top:370px;left:635px;letter-spacing:-0.79px">GBP</div>
<div class="c" style="top:370px;left:716px;letter-spacing:-1.47px">CC</div>
<div class="c" style="top:370px;left:837.8px;letter-spacing:0.04px">169.3</div>
<div class="c" style="top:370px;left:946.3px;letter-spacing:0.04px">17945.8</div>
<div class="c" style="top:390px;left:28px;letter-spacing:-0.24px">AMUAIJXXXX00064</div>
<div class="c" style="top:390px;left:157px;letter-spacing:0.05px">21/05/XXXX</div>
<div class="c" style="top:390px;left:232px;letter-spacing:-0.53px">MUMXXX CARXX SERVICES CENTER AIRPORT PVT LTD - MH - CR</div>
<div class="c" style="top:390px;left:635px;letter-spacing:-0.34px">INR</div>
<div class="c" style="top:390px;left:716px;letter-spacing:-1.00px">PP</div>
<div class="c" style="top:390px;left:848.8px;letter-spacing:0.02px">750</div>
<div class="c" style="top:390px;left:971.8px;letter-spacing:0.02px">750</div>
<div class="c" style="top:410px;left:28px;letter-spacing:-0.24px">AMUAIJXXXX00054</div>
<div class="c" style="top:410px;left:157px;letter-spacing:0.05px">15/05/XXXX</div>
<div class="c" style="top:410px;left:232px;letter-spacing:-0.68px">WORXDRXXD EXXXSS CO LTD - KR - CR</div>
<div class="c" style="top:410px;left:635px;letter-spacing:-0.66px">USD</div>
<div class="c" style="top:410px;left:716px;letter-spacing:-1.00px">PP</div>
<div class="c" style="top:410px;left:830.5px;letter-spacing:0.04px">534.08</div>
<div class="c" style="top:410px;left:931.8px;letter-spacing:0.03px">44515.568</div>
<div class="c" style="top:430px;left:28px;letter-spacing:-0.24px">AMUAIJXXXX00064</div>
<div class="c" style="top:430px;left:157px;letter-spacing:0.05px">21/05/XXXX</div>
<div class="c" style="top:430px;left:232px;letter-spacing:-0.84px">RAXXX TRXXS CARGO</div>
<div class="c" style="top:430px;left:635px;letter-spacing:-0.34px">INR</div>
<div class="c" style="top:430px;left:716px;letter-spacing:-1.00px">PP</div>
<div class="c" style="top:430px;left:841.5px;letter-spacing:0.02px">4250</div>
<div class="c" style="top:430px;left:964.5px;letter-spacing:0.02px">4250</div>
<div class="c" style="top:450px;left:28px;letter-spacing:-0.24px">AMUAIJXXXX00065</div>
<div class="c" style="top:450px;left:157px;letter-spacing:0.05px">21/05/XXXX</div>
<div class="c" style="top:450px;left:232px;letter-spacing:-0.53px">MUMXXX CARXX SERVICES CENTER AIRPORT PVT LTD - MH - CR</div>
<div class="c" style="top:450px;left:635px;letter-spacing:-0.34px">INR</div>
<div class="c" style="top:450px;left:716px;letter-spacing:-1.47px">CC</div>
<div class="c" style="top:450px;left:848.8px;letter-spacing:0.02px">750</div>
<div class="c" style="top:450px;left:971.8px;letter-spacing:0.02px">750</div>
<div class="c" style="top:470px;left:28px;letter-spacing:-0.24px">AMUAIJXXXX00065</div>
<div class="c" style="top:470px;left:157px;letter-spacing:0.05px">21/05/XXXX</div>
<div class="c" style="top:470px;left:232px;letter-spacing:-0.52px">SINGAPXXX AIRLXXXX CARGO PTE LTD - MH</div>
<div class="c" style="top:470px;left:635px;letter-spacing:-0.34px">INR</div>
<div class="c" style="top:470px;left:716px;letter-spacing:-1.47px">CC</div>
<div class="c" style="top:470px;left:841.5px;letter-spacing:0.02px">4634</div>
<div class="c" style="top:470px;left:964.5px;letter-spacing:0.02px">4634</div>
<div class="c" style="top:490px;left:28px;letter-spacing:-0.24px">AMUAIJXXXX00071</div>
<div class="c" style="top:490px;left:157px;letter-spacing:0.05px">24/05/XXXX</div>
<div class="c" style="top:490px;left:232px;letter-spacing:0.23px">Exprxxx AxxFreight Unlimited Inc. - US - CR</div>
<div class="c" style="top:490px;left:635px;letter-spacing:-0.66px">USD</div>
<div class="c" style="top:490px;left:716px;letter-spacing:-1.47px">CC</div>
<div class="c" style="top:490px;left:837.8px;letter-spacing:0.04px">460.7</div>
<div class="c" style="top:490px;left:931.8px;letter-spacing:0.03px">38399.345</div>
<div class="c" style="top:510px;left:28px;letter-spacing:-0.24px">AMUAIJXXXX00050</div>
<div class="c" style="top:510px;left:157px;letter-spacing:0.05px">14/05/XXXX</div>
<div class="c" style="top:510px;left:232px;letter-spacing:-0.50px">INTERCAXXXX C &amp; F AGEXXY - MH - CR</div>
<div class="c" style="top:510px;left:635px;letter-spacing:-0.34px">INR</div>
<div class="c" style="top:510px;left:716px;letter-spacing:-1.00px">PP</div>
<div class="c" style="top:510px;left:816.0px;letter-spacing:0.03px">13503.76</div>
<div class="c" style="top:510px;left:939.0px;letter-spacing:0.03px">13503.76</div>
<div class="c" style="top:530px;left:28px;letter-spacing:-0.56px">BLRAIJXXXX00002</div>
<div class="c" style="top:530px;left:157px;letter-spacing:0.05px">10/5/XXXX</div>
<div class="c" style="top:530px;left:232px;letter-spacing:-0.38px">WXX (BENGALURU) PVT LTD - KA - CR</div>
<div class="c" style="top:530px;left:635px;letter-spacing:-0.34px">INR</div>
<div class="c" style="top:530px;left:716px;letter-spacing:-1.00px">PP</div>
<div class="c" style="top:530px;left:808.8px;letter-spacing:0.03px">137026.89</div>
<div class="c" style="top:530px;left:931.8px;letter-spacing:0.03px">137026.89</div>
<div class="c" style="top:550px;left:28px;letter-spacing:-0.24px">AMUAIJXXXX00068</div>
<div class="c" style="top:550px;left:157px;letter-spacing:0.05px">22/05/XXXX</div>
<div class="c" style="top:550px;left:232px;letter-spacing:-0.33px">CATXXX PACIXXX AIRWAYS LTD - MH</div>
<div class="c" style="top:550px;left:635px;letter-spacing:-0.34px">INR</div>
<div class="c" style="top:550px;left:716px;letter-spacing:-1.47px">CC</div>
<div class="c" style="top:550px;left:834.2px;letter-spacing:0.02px">10604</div>
<div class="c" style="top:550px;left:957.2px;letter-spacing:0.02px">10604</div>
<div class="c" style="top:570px;left:28px;letter-spacing:-0.24px">AMUAIJXXXX00059</div>
<div class="c" style="top:570px;left:157px;letter-spacing:0.05px">21/05/XXXX</div>
<div class="c" style="top:570px;left:232px;letter-spacing:-0.50px">INTERCAXXXX C &amp; F AGEXXY - MH - CR</div>
<div class="c" style="top:570px;left:635px;letter-spacing:-0.34px">INR</div>
<div class="c" style="top:570px;left:716px;letter-spacing:-1.00px">PP</div>
<div class="c" style="top:570px;left:841.5px;letter-spacing:0.02px">3670</div>
<div class="c" style="top:570px;left:964.5px;letter-spacing:0.02px">3670</div>
<div class="c" style="top:590px;left:28px;letter-spacing:-0.24px">AMUAIJXXXX00066</div>
<div class="c" style="top:590px;left:157px;letter-spacing:0.05px">21/05/XXXX</div>
<div class="c" style="top:590px;left:232px;letter-spacing:-0.53px">MUMXXX CARXX SERVICES CENTER AIRPORT PVT LTD - MH - CR</div>
<div class="c" style="top:590px;left:635px;letter-spacing:-0.34px">INR</div>
<div class="c" style="top:590px;left:716px;letter-spacing:-1.47px">CC</div>
<div class="c" style="top:590px;left:841.5px;letter-spacing:0.02px">5250</div>
<div class="c" style="top:590px;left:964.5px;letter-spacing:0.02px">5250</div>
<div class="c" style="top:610px;left:28px;letter-spacing:-0.51px">KOLAIJXXXX00016</div>
<div class="c" style="top:610px;left:157px;letter-spacing:0.05px">21/05/XXXX</div>
<div class="c" style="top:610px;left:232px;letter-spacing:-0.15px">AXX INDIA LTD - WB</div>
<div class="c" style="top:610px;left:635px;letter-spacing:-0.34px">INR</div>
<div class="c" style="top:610px;left:716px;letter-spacing:-1.47px">CC</div>
<div class="c" style="top:610px;left:841.5px;letter-spacing:0.02px">2360</div>
<div class="c" style="top:610px;left:964.5px;letter-spacing:0.02px">2360</div>
<div class="c" style="top:630px;left:28px;letter-spacing:-0.24px">AMUAIJXXXX00061</div>
<div class="c" style="top:630px;left:157px;letter-spacing:0.05px">21/05/XXXX</div>
<div class="c" style="top:630px;left:232px;letter-spacing:-0.53px">MUMXXX CARXX SERVICES CENTER AIRPORT PVT LTD - MH - CR</div>
<div class="c" style="top:630px;left:635px;letter-spacing:-0.34px">INR</div>
<div class="c" style="top:630px;left:716px;letter-spacing:-1.00px">PP</div>
<div class="c" style="top:630px;left:848.8px;letter-spacing:0.02px">750</div>
<div class="c" style="top:630px;left:971.8px;letter-spacing:0.02px">750</div>
<div class="c" style="top:650px;left:28px;letter-spacing:-0.24px">AMUAIJXXXX00063</div>
<div class="c" style="top:650px;left:157px;letter-spacing:0.05px">21/05/XXXX</div>
<div class="c" style="top:650px;left:232px;letter-spacing:-0.53px">MUMXXX CARXX SERVICES CENTER AIRPORT PVT LTD - MH - CR</div>
<div class="c" style="top:650px;left:635px;letter-spacing:-0.34px">INR</div>
<div class="c" style="top:650px;left:716px;letter-spacing:-1.47px">CC</div>
<div class="c" style="top:650px;left:848.8px;letter-spacing:0.02px">750</div>
<div class="c" style="top:650px;left:971.8px;letter-spacing:0.02px">750</div>
<div class="c" style="top:670px;left:28px;letter-spacing:-0.24px">AMUAIJXXXX00050</div>
<div class="c" style="top:670px;left:157px;letter-spacing:0.05px">14/05/XXXX</div>
<div class="c" style="top:670px;left:232px;letter-spacing:-0.55px">FAIRXXXX MULTIXXXX SINGAPORE PTE LTD - SG - CR</div>
<div class="c" style="top:670px;left:635px;letter-spacing:-0.66px">USD</div>
<div class="c" style="top:670px;left:716px;letter-spacing:-1.00px">PP</div>
<div class="c" style="top:670px;left:830.5px;letter-spacing:0.04px">612.78</div>
<div class="c" style="top:670px;left:931.8px;letter-spacing:0.03px">51075.213</div>
<div class="c" style="top:690px;left:28px;letter-spacing:-0.51px">KOLAIJXXXX00016</div>
<div class="c" style="top:690px;left:157px;letter-spacing:0.05px">21/05/XXXX</div>
<div class="c" style="top:690px;left:232px;letter-spacing:-0.60px">M.X.ENTERPXXXX</div>
<div class="c" style="top:690px;left:635px;letter-spacing:-0.34px">INR</div>
<div class="c" style="top:690px;left:716px;letter-spacing:-1.47px">CC</div>
<div class="c" style="top:690px;left:841.5px;letter-spacing:0.26px">2110</div>
<div class="c" style="top:690px;left:964.5px;letter-spacing:0.26px">2110</div>
<div class="c" style="top:710px;left:28px;letter-spacing:-0.24px">AMUAIJXXXX00054</div>
<div class="c" style="top:710px;left:157px;letter-spacing:0.05px">15/05/XXXX</div>
<div class="c" style="top:710px;left:232px;letter-spacing:-0.50px">INTERCAXXXX C &amp; F AGEXXY - MH - CR</div>
<div class="c" style="top:710px;left:635px;letter-spacing:-0.34px">INR</div>
<div class="c" style="top:710px;left:716px;letter-spacing:-1.00px">PP</div>
<div class="c" style="top:710px;left:816.0px;letter-spacing:0.03px">15535.72</div>
<div class="c" style="top:710px;left:939.0px;letter-spacing:0.03px">15535.72</div>
<div class="c" style="top:730px;left:28px;letter-spacing:-0.24px">AMUAIJXXXX00060</div>
<div class="c" style="top:730px;left:157px;letter-spacing:0.05px">21/05/XXXX</div>
<div class="c" style="top:730px;left:232px;letter-spacing:-0.50px">AX AIRXXXX SERVICES LIMITED - MH - CR</div>
<div class="c" style="top:730px;left:635px;letter-spacing:-0.34px">INR</div>
<div class="c" style="top:730px;left:716px;letter-spacing:-1.47px">CC</div>
<div class="c" style="top:730px;left:841.5px;letter-spacing:0.02px">3350</div>
<div class="c" style="top:730px;left:964.5px;letter-spacing:0.02px">3350</div>
<div class="c" style="top:750px;left:28px;letter-spacing:-0.24px">AMUAIJXXXX00054</div>
<div class="c" style="top:750px;left:157px;letter-spacing:0.05px">15/05/XXXX</div>
<div class="c" style="top:750px;left:232px;letter-spacing:-0.50px">AX AIRXXXX SERVICES LIMITED - MH - CR</div>
<div class="c" style="top:750px;left:635px;letter-spacing:-0.34px">INR</div>
<div class="c" style="top:750px;left:716px;letter-spacing:-1.00px">PP</div>
<div class="c" style="top:750px;left:841.5px;letter-spacing:0.02px">1504</div>
<div class="c" style="top:750px;left:964.5px;letter-spacing:0.02px">1504</div>
<div class="c" style="top:770px;left:28px;letter-spacing:-0.24px">AMUAIJXXXX00067</div>
<div class="c" style="top:770px;left:157px;letter-spacing:0.05px">22/05/XXXX</div>
<div class="c" style="top:770px;left:232px;letter-spacing:-0.55px">BLXX DXXT EXPXXXXS LTD. - MH</div>
<div class="c" style="top:770px;left:635px;letter-spacing:-0.34px">INR</div>
<div class="c" style="top:770px;left:716px;letter-spacing:-1.47px">CC</div>
<div class="c" style="top:770px;left:841.5px;letter-spacing:0.02px">3087</div>
<div class="c" style="top:770px;left:964.5px;letter-spacing:0.02px">3087</div>
<div class="c" style="top:790px;left:28px;letter-spacing:-0.24px">AMUAIJXXXX00067</div>
<div class="c" style="top:790px;left:157px;letter-spacing:0.05px">22/05/XXXX</div>
<div class="c" style="top:790px;left:232px;letter-spacing:-0.29px">DEEXXX KAXXM - IMP - MH - CR</div>
<div class="c" style="top:790px;left:635px;letter-spacing:-0.34px">INR</div>
<div class="c" style="top:790px;left:716px;letter-spacing:-1.47px">CC</div>
<div class="c" style="top:790px;left:848.8px;letter-spacing:0.02px">750</div>
<div class="c" style="top:790px;left:971.8px;letter-spacing:0.02px">750</div>
<div class="c" style="top:810px;left:28px;letter-spacing:-0.24px">AMUAIJXXXX00059</div>
<div class="c" style="top:810px;left:157px;letter-spacing:0.05px">21/05/XXXX</div>
<div class="c" style="top:810px;left:232px;letter-spacing:-0.60px">ORXXXANI SXL - EUR - CR</div>
<div class="c" style="top:810px;left:635px;letter-spacing:-0.87px">EUR</div>
<div class="c" style="top:810px;left:716px;letter-spacing:-1.00px">PP</div>
<div class="c" style="top:810px;left:848.8px;letter-spacing:0.02px">215</div>
<div class="c" style="top:810px;left:946.3px;letter-spacing:0.04px">19672.5</div>
<div class="c" style="top:830px;left:28px;letter-spacing:-0.56px">BLRAIJXXXX00002</div>
<div class="c" style="top:830px;left:157px;letter-spacing:0.05px">10/5/XXXX</div>
<div class="c" style="top:830px;left:232px;letter-spacing:-0.54px">RAXX ALEXANXXX(STAFF) - KA</div>
<div class="c" style="top:830px;left:635px;letter-spacing:-0.34px">INR</div>
<div class="c" style="top:830px;left:716px;letter-spacing:-1.00px">PP</div>
<div class="c" style="top:830px;left:834.2px;letter-spacing:0.02px">43910</div>
<div class="c" style="top:830px;left:957.2px;letter-spacing:0.02px">43910</div>
<div class="c" style="top:850px;left:28px;letter-spacing:-0.24px">AMUAIJXXXX00057</div>
<div class="c" style="top:850px;left:157px;letter-spacing:0.05px">16/05/XXXX</div>
<div class="c" style="top:850px;left:232px;letter-spacing:-0.55px">FAIRXXXX MULTIXXXX SINGAPORE PTE LTD - SG - CR</div>
<div class="c" style="top:850px;left:635px;letter-spacing:-0.66px">USD</div>
<div class="c" style="top:850px;left:716px;letter-spacing:-1.00px">PP</div>
<div class="c" style="top:850px;left:830.5px;letter-spacing:0.04px">565.07</div>
<div class="c" style="top:850px;left:931.8px;letter-spacing:0.03px">47098.585</div>
<div class="c" style="top:870px;left:28px;letter-spacing:-0.24px">AMUAIJXXXX00066</div>
<div class="c" style="top:870px;left:157px;letter-spacing:0.05px">21/05/XXXX</div>
<div class="c" style="top:870px;left:232px;letter-spacing:-0.60px">EMBAXXX FREIGHT SERVICES (UK) LTD</div>
<div class="c" style="top:870px;left:635px;letter-spacing:-0.79px">GBP</div>
<div class="c" style="top:870px;left:716px;letter-spacing:-1.47px">CC</div>
<div class="c" style="top:870px;left:837.8px;letter-spacing:0.04px">615.5</div>
<div class="c" style="top:870px;left:939.0px;letter-spacing:0.03px">65673.85</div>
<div class="c" style="top:890px;left:28px;letter-spacing:-0.24px">AMUAIJXXXX00064</div>
<div class="c" style="top:890px;left:157px;letter-spacing:0.05px">21/05/XXXX</div>
<div class="c" style="top:890px;left:232px;letter-spacing:-0.29px">DEEXXX KAXXM - IMP - MH - CR</div>
<div class="c" style="top:890px;left:635px;letter-spacing:-0.34px">INR</div>
<div class="c" style="top:890px;left:716px;letter-spacing:-1.00px">PP</div>
<div class="c" style="top:890px;left:848.8px;letter-spacing:0.02px">450</div>
<div class="c" style="top:890px;left:971.8px;letter-spacing:0.02px">450</div>
<div class="c" style="top:910px;left:28px;letter-spacing:-0.24px">AMUAIJXXXX00072</div>
<div class="c" style="top:910px;left:157px;letter-spacing:0.05px">27/05/XXXX</div>
<div class="c" style="top:910px;left:232px;letter-spacing:-0.50px">INTERGLXXX AIR TRANSPXXX LTD - MH - CR</div>
<div class="c" style="top:910px;left:635px;letter-spacing:-0.34px">INR</div>
<div class="c" style="top:910px;left:716px;letter-spacing:-1.00px">PP</div>
<div class="c" style="top:910px;left:841.5px;letter-spacing:0.02px">3892</div>
<div class="c" style="top:910px;left:964.5px;letter-spacing:0.02px">3892</div>
<div class="c" style="top:930px;left:28px;letter-spacing:-0.24px">AMUAIJXXXX00057</div>
<div class="c" style="top:930px;left:157px;letter-spacing:0.05px">16/05/XXXX</div>
<div class="c" style="top:930px;left:232px;letter-spacing:-0.50px">INTERCAXXXX C &amp; F AGEXXY - MH - CR</div>
<div class="c" style="top:930px;left:635px;letter-spacing:-0.34px">INR</div>
<div class="c" style="top:930px;left:716px;letter-spacing:-1.00px">PP</div>
<div class="c" style="top:930px;left:816.0px;letter-spacing:0.15px">11316.32</div>
<div class="c" style="top:930px;left:939.0px;letter-spacing:0.15px">11316.32</div>
<div class="c" style="top:950px;left:28px;letter-spacing:-0.24px">AMUAIJXXXX00063</div>
<div class="c" style="top:950px;left:157px;letter-spacing:0.05px">21/05/XXXX</div>
<div class="c" style="top:950px;left:232px;letter-spacing:-0.84px">RAXXX TRXXS CARGO</div>
<div class="c" style="top:950px;left:635px;letter-spacing:-0.34px">INR</div>
<div class="c" style="top:950px;left:716px;letter-spacing:-1.47px">CC</div>
<div class="c" style="top:950px;left:841.5px;letter-spacing:0.02px">4250</div>
<div class="c" style="top:950px;left:964.5px;letter-spacing:0.02px">4250</div>
<div class="a" style="left:1378px;top:210px;width:1px;height:752px;background:#ababab"></div>

<!-- vertical scrollbar -->
<div class="a" style="left:1379px;top:192px;width:21px;height:770px;background:#fff"></div>
<div class="a" style="left:1382px;top:207px;width:15px;height:741px;background:#f0f0f0"></div>
<div class="a" style="left:1382px;top:193px;width:13px;height:13px;border:1px solid #ababab;background:#fff"></div>
<div class="dd" style="left:1386px;top:197px;border-left-width:4px;border-right-width:4px;border-top:none;border-bottom:4px solid #777"></div>
<div class="a" style="left:1382px;top:207px;width:13px;height:471px;border:1px solid #ababab;background:#fff"></div>
<div class="a" style="left:1382px;top:948px;width:13px;height:13px;border:1px solid #ababab;background:#fff"></div>
<div class="dd" style="left:1386px;top:953px;border-left-width:4px;border-right-width:4px;border-top-width:4px;border-top-color:#777"></div>

<!-- ============ SHEET TABS ============ -->
<div class="a" style="left:0;top:962px;width:1400px;height:28px;background:#f3f3f3"></div>
<div class="a" style="left:0;top:962px;width:1379px;height:1px;background:#ababab"></div>
<svg style="left:27px;top:971px" width="6" height="9" viewBox="0 0 6 9"><path d="M5 0V9L0 4.5Z" fill="#c6c6c6"/></svg>
<svg style="left:56px;top:971px" width="6" height="9" viewBox="0 0 6 9"><path d="M0 0V9L5 4.5Z" fill="#b3b3b3"/></svg>
<div class="a" style="left:100px;top:962px;width:238px;height:24px;background:#fff;border-left:1px solid #ababab;border-right:1px solid #ababab"></div>
<div class="a" style="left:100px;top:985px;width:240px;height:3px;background:#217346"></div>
<div class="t" style="left:112px;top:967px;font-size:13px;line-height:16px;font-weight:bold;color:#217346;letter-spacing:-0.2px">Doc-Pending Vouchers-Exp_202405</div>
<svg style="left:371px;top:967px" width="18" height="18" viewBox="0 0 18 18">
 <circle cx="8.5" cy="8.5" r="7.5" fill="none" stroke="#777" stroke-width="1.2"/>
 <path d="M8.5 4V13M4 8.5H13" stroke="#777" stroke-width="1.6"/>
</svg>
<div class="a" style="left:840px;top:970px;width:2px;height:2px;background:#aaa"></div>
<div class="a" style="left:840px;top:974px;width:2px;height:2px;background:#aaa"></div>
<div class="a" style="left:840px;top:978px;width:2px;height:2px;background:#aaa"></div>
<div class="a" style="left:857px;top:969px;width:521px;height:14px;border:1px solid #ababab;background:#f0f0f0"></div>
<div class="a" style="left:857px;top:969px;width:13px;height:14px;border:1px solid #ababab;background:#fff"></div>
<svg style="left:861px;top:972px" width="5" height="9" viewBox="0 0 5 9"><path d="M4.5 0V9L0 4.5Z" fill="#777"/></svg>
<div class="a" style="left:871px;top:969px;width:451px;height:14px;border:1px solid #ababab;background:#fff"></div>
<div class="a" style="left:1364px;top:969px;width:13px;height:14px;border:1px solid #ababab;background:#fff"></div>
<svg style="left:1369px;top:972px" width="5" height="9" viewBox="0 0 5 9"><path d="M0 0V9L4.5 4.5Z" fill="#777"/></svg>

<!-- ============ STATUS BAR ============ -->
<div class="a" style="left:0;top:990px;width:1400px;height:22px;background:#217346"></div>
<div class="t" style="left:7.5px;top:994px;font-size:11px;color:#fff;letter-spacing:-0.8px">READY</div>
<div class="a" style="left:1108px;top:990px;width:38px;height:22px;background:#0d5c32"></div>
<svg style="left:1119px;top:993px" width="16" height="16" viewBox="1119 993 16 16">
 <path d="M1120.5 994.5H1132.5V1006.5H1120.5Z M1124.5 994.5V1006.5 M1128.5 994.5V1006.5 M1120.5 998.5H1132.5 M1120.5 1002.5H1132.5" fill="none" stroke="#fff" stroke-width="1.1"/>
</svg>
<svg style="left:1157px;top:993px" width="17" height="16" viewBox="1157 993 17 16">
 <path d="M1158.5 994.5H1171.5V1006.5H1158.5Z M1161.5 996.5H1168.5V1004.5H1161.5Z" fill="none" stroke="#fff"/>
 <path d="M1163 998.5H1167M1163 1000.5H1167M1163 1002.5H1167" stroke="#fff" stroke-width="0.9"/>
</svg>
<svg style="left:1195px;top:993px" width="17" height="16" viewBox="1195 993 17 16">
 <path d="M1196.5 994.5H1209.5V1006.5H1196.5Z" fill="none" stroke="#fff"/>
 <rect x="1197" y="995" width="2.5" height="7" fill="#e8e8e8"/>
 <rect x="1201.5" y="995" width="2.5" height="7" fill="#e8e8e8"/>
 <path d="M1196.5 1002.5H1204.5V995" fill="none" stroke="#fff"/>
</svg>
<div class="a" style="left:1227px;top:1000px;width:6px;height:2px;background:#fff"></div>
<div class="a" style="left:1237px;top:1000px;width:100px;height:1px;background:#fff"></div>
<div class="a" style="left:1285px;top:995px;width:4px;height:11px;background:#fff"></div>
<div class="a" style="left:1341px;top:1000px;width:8px;height:2px;background:#fff"></div>
<div class="a" style="left:1344px;top:997px;width:2px;height:8px;background:#fff"></div>
<div class="t" style="left:1365px;top:994px;font-size:12px;color:#fff;letter-spacing:-0.4px">100%</div>
</body></html>
